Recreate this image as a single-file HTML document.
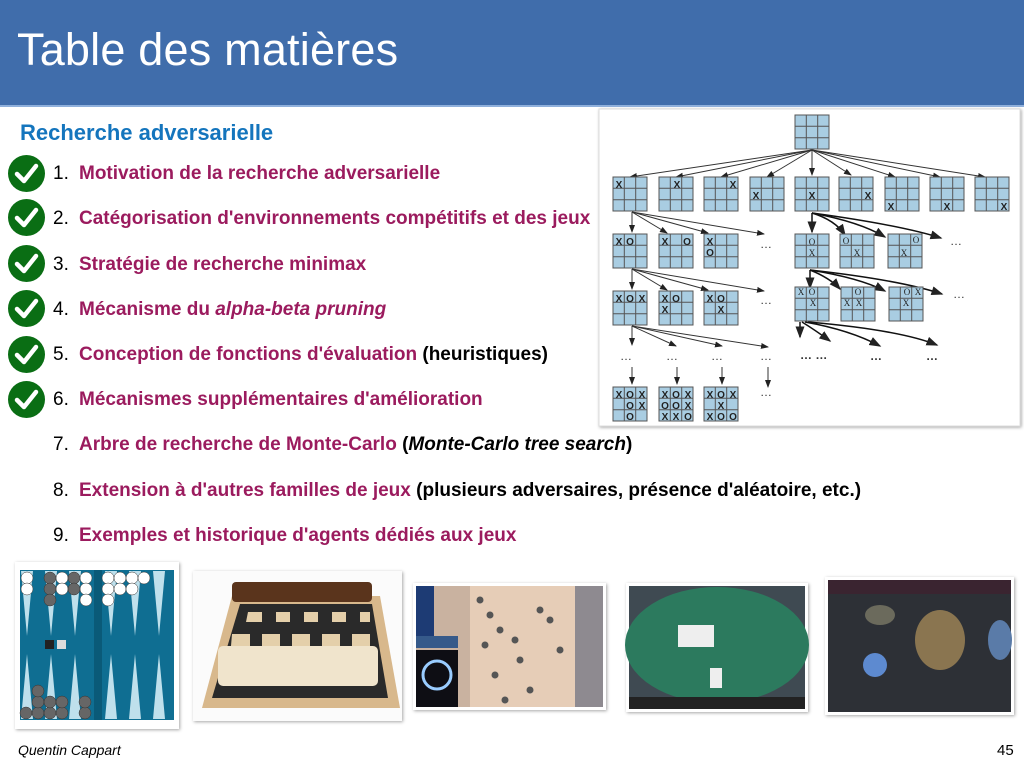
<!DOCTYPE html>
<html><head><meta charset="utf-8"><style>
body{margin:0;width:1024px;height:768px;overflow:hidden;background:#fff;font-family:"Liberation Sans",sans-serif;position:relative}
.hdr{position:absolute;left:0;top:0;width:1024px;height:105px;background:#406dab;border-bottom:2px solid #8fb0dc}
.hdr h1{margin:0;position:absolute;left:17px;top:24px;font-weight:normal;color:#fff;font-size:45px;letter-spacing:0.2px}
.sec{position:absolute;left:20px;top:120px;color:#1475bd;font-weight:bold;font-size:22px}
.it{position:absolute;left:53px;font-size:19px;white-space:nowrap;color:#000}
.it .n{display:inline-block;width:26px}
.it b{color:#9b1b5e}
.it .k{font-weight:bold;color:#000}
.ck{position:absolute;left:8px;width:37px;height:37px;border-radius:50%;background:#0a6e14}
.ft{position:absolute;top:742px;font-size:14px}
</style></head><body>
<div class="hdr"><h1>Table des matières</h1></div>
<div class="sec">Recherche adversarielle</div>

<div class="ck" style="top:155px"><svg width="37" height="37"><path d="M9 19 L16 26 L28 11" stroke="#fff" stroke-width="4.5" fill="none" stroke-linecap="round" stroke-linejoin="round"/></svg></div>
<div class="ck" style="top:199px"><svg width="37" height="37"><path d="M9 19 L16 26 L28 11" stroke="#fff" stroke-width="4.5" fill="none" stroke-linecap="round" stroke-linejoin="round"/></svg></div>
<div class="ck" style="top:245px"><svg width="37" height="37"><path d="M9 19 L16 26 L28 11" stroke="#fff" stroke-width="4.5" fill="none" stroke-linecap="round" stroke-linejoin="round"/></svg></div>
<div class="ck" style="top:290px"><svg width="37" height="37"><path d="M9 19 L16 26 L28 11" stroke="#fff" stroke-width="4.5" fill="none" stroke-linecap="round" stroke-linejoin="round"/></svg></div>
<div class="ck" style="top:336px"><svg width="37" height="37"><path d="M9 19 L16 26 L28 11" stroke="#fff" stroke-width="4.5" fill="none" stroke-linecap="round" stroke-linejoin="round"/></svg></div>
<div class="ck" style="top:381px"><svg width="37" height="37"><path d="M9 19 L16 26 L28 11" stroke="#fff" stroke-width="4.5" fill="none" stroke-linecap="round" stroke-linejoin="round"/></svg></div>

<div class="it" style="top:163px"><span class="n">1.</span><b>Motivation de la recherche adversarielle</b></div>
<div class="it" style="top:208px"><span class="n">2.</span><b>Catégorisation d'environnements compétitifs et des jeux</b></div>
<div class="it" style="top:254px"><span class="n">3.</span><b>Stratégie de recherche minimax</b></div>
<div class="it" style="top:299px"><span class="n">4.</span><b>Mécanisme du <i>alpha-beta pruning</i></b></div>
<div class="it" style="top:344px"><span class="n">5.</span><b>Conception de fonctions d'évaluation</b> <span class="k">(heuristiques)</span></div>
<div class="it" style="top:389px"><span class="n">6.</span><b>Mécanismes supplémentaires d'amélioration</b></div>
<div class="it" style="top:434px"><span class="n">7.</span><b>Arbre de recherche de Monte-Carlo</b> <span class="k">(<i>Monte-Carlo tree search</i>)</span></div>
<div class="it" style="top:480px"><span class="n">8.</span><b>Extension à d'autres familles de jeux</b> <span class="k">(plusieurs adversaires, présence d'aléatoire, etc.)</span></div>
<div class="it" style="top:525px"><span class="n">9.</span><b>Exemples et historique d'agents dédiés aux jeux</b></div>

<svg style="position:absolute;left:0;top:0" width="1024" height="768">
<defs>
<g id="g"><rect width="34" height="34" fill="#a9cde2" stroke="#555" stroke-width="1"/><path d="M11.3 0V34M22.7 0V34M0 11.3H34M0 22.7H34" stroke="#555" stroke-width="1"/></g>
<marker id="a" markerWidth="8" markerHeight="8" refX="7" refY="4" orient="auto"><path d="M0 1L8 4L0 7Z" fill="#222"/></marker>
<filter id="sh"><feDropShadow dx="1" dy="1" stdDeviation="1.5" flood-opacity="0.35"/></filter>
</defs>
<rect x="599" y="109" width="421" height="317" fill="#fff" stroke="#ddd" filter="url(#sh)"/>
<g stroke="#333" stroke-width="1" marker-end="url(#a)">
<line x1="812" y1="150" x2="630" y2="177"/><line x1="812" y1="150" x2="676" y2="177"/><line x1="812" y1="150" x2="721" y2="177"/><line x1="812" y1="150" x2="767" y2="177"/><line x1="812" y1="150" x2="812" y2="175"/><line x1="812" y1="150" x2="851" y2="175"/><line x1="812" y1="150" x2="895" y2="177"/><line x1="812" y1="150" x2="940" y2="177"/><line x1="812" y1="150" x2="985" y2="177"/>
<line x1="632" y1="212" x2="632" y2="232"/><line x1="632" y1="212" x2="667" y2="233"/><line x1="632" y1="212" x2="708" y2="233"/><line x1="632" y1="212" x2="764" y2="234"/>
<line x1="632" y1="269" x2="632" y2="289"/><line x1="632" y1="269" x2="667" y2="290"/><line x1="632" y1="269" x2="708" y2="290"/><line x1="632" y1="269" x2="764" y2="291"/>
<line x1="632" y1="326" x2="632" y2="345"/><line x1="632" y1="326" x2="676" y2="346"/><line x1="632" y1="326" x2="722" y2="346"/><line x1="632" y1="326" x2="768" y2="347"/>
<line x1="632" y1="367" x2="632" y2="384"/><line x1="677" y1="367" x2="677" y2="384"/><line x1="722" y1="367" x2="722" y2="384"/><line x1="768" y1="367" x2="768" y2="387"/>
</g>
<g stroke="#111" stroke-width="1.5" marker-end="url(#a)" fill="none">
<line x1="812" y1="213" x2="812" y2="232"/><path d="M812 213 Q835 220 845 235"/><path d="M812 213 Q860 222 885 237"/><path d="M812 213 Q900 225 941 238"/>
<line x1="810" y1="270" x2="810" y2="288"/><path d="M810 270 Q830 278 840 289"/><path d="M810 270 Q860 278 885 291"/><path d="M810 270 Q900 280 942 294"/>
<line x1="800" y1="322" x2="800" y2="337"/><path d="M802 322 Q815 330 830 341"/><path d="M805 322 Q850 330 880 346"/><path d="M808 322 Q900 330 937 345"/>
</g>
<use href="#g" x="795" y="115"/>
<use href="#g" x="613" y="177"/><use href="#g" x="659" y="177"/><use href="#g" x="704" y="177"/><use href="#g" x="750" y="177"/><use href="#g" x="795" y="177"/><use href="#g" x="839" y="177"/><use href="#g" x="885" y="177"/><use href="#g" x="930" y="177"/><use href="#g" x="975" y="177"/>
<use href="#g" x="613" y="234"/><use href="#g" x="659" y="234"/><use href="#g" x="704" y="234"/><use href="#g" x="795" y="234"/><use href="#g" x="840" y="234"/><use href="#g" x="888" y="234"/>
<use href="#g" x="613" y="291"/><use href="#g" x="659" y="291"/><use href="#g" x="704" y="291"/><use href="#g" x="795" y="287"/><use href="#g" x="841" y="287"/><use href="#g" x="889" y="287"/>
<use href="#g" x="613" y="387"/><use href="#g" x="659" y="387"/><use href="#g" x="704" y="387"/>
<g font-family="Liberation Sans" font-weight="bold" font-size="10" text-anchor="middle" fill="#222">
<text x="619" y="188">X</text><text x="677" y="188">X</text><text x="733" y="188">X</text><text x="756" y="199">X</text><text x="812" y="199">X</text><text x="868" y="199">X</text><text x="891" y="210">X</text><text x="947" y="210">X</text><text x="1004" y="210">X</text>
<text x="619" y="245">X</text><text x="630" y="245">O</text><text x="665" y="245">X</text><text x="687" y="245">O</text><text x="710" y="245">X</text><text x="710" y="256">O</text>
<text x="619" y="302">X</text><text x="630" y="302">O</text><text x="642" y="302">X</text><text x="665" y="302">X</text><text x="676" y="302">O</text><text x="665" y="313">X</text><text x="710" y="302">X</text><text x="721" y="302">O</text><text x="721" y="313">X</text>
<text x="619" y="398">X</text><text x="630" y="398">O</text><text x="642" y="398">X</text><text x="630" y="409">O</text><text x="642" y="409">X</text><text x="630" y="420">O</text>
<text x="665" y="398">X</text><text x="676" y="398">O</text><text x="688" y="398">X</text><text x="665" y="409">O</text><text x="676" y="409">O</text><text x="688" y="409">X</text><text x="665" y="420">X</text><text x="676" y="420">X</text><text x="688" y="420">O</text>
<text x="710" y="398">X</text><text x="721" y="398">O</text><text x="733" y="398">X</text><text x="721" y="409">X</text><text x="710" y="420">X</text><text x="721" y="420">O</text><text x="733" y="420">O</text>
</g>
<g font-family="Liberation Serif" font-size="9" text-anchor="middle" fill="#222">
<text x="812" y="245">O</text><text x="812" y="256">X</text><text x="846" y="244">O</text><text x="857" y="256">X</text><text x="916" y="243">O</text><text x="904" y="256">X</text>
<text x="801" y="295">X</text><text x="812" y="295">O</text><text x="813" y="306">X</text><text x="858" y="295">O</text><text x="847" y="306">X</text><text x="859" y="306">X</text><text x="907" y="295">O</text><text x="918" y="295">X</text><text x="906" y="306">X</text>
</g>
<g font-family="Liberation Sans" font-size="12" fill="#333">
<text x="760" y="248">…</text><text x="760" y="304">…</text><text x="950" y="245">…</text><text x="953" y="298">…</text>
<text x="620" y="360">…</text><text x="666" y="360">…</text><text x="711" y="360">…</text><text x="760" y="360">…</text><text x="760" y="396">…</text>
<text x="800" y="359" font-weight="bold">… …</text><text x="870" y="360" font-weight="bold">…</text><text x="926" y="360" font-weight="bold">…</text>
</g>

<!-- backgammon -->
<rect x="15" y="562" width="164" height="167" fill="#fff" filter="url(#sh)"/>
<rect x="20" y="570" width="154" height="150" fill="#0f6e92"/>
<rect x="94" y="570" width="8" height="150" fill="#0a5a78"/>
<g fill="#bfe0ec">
<path d="M21 571h12l-6 65zM45 571h12l-6 65zM69 571h12l-6 65zM105 571h12l-6 65zM129 571h12l-6 65zM153 571h12l-6 65z"/>
<path d="M21 719h12l-6-65zM45 719h12l-6-65zM69 719h12l-6-65zM105 719h12l-6-65zM129 719h12l-6-65zM153 719h12l-6-65z"/>
</g>
<g fill="#fff" stroke="#333" stroke-width=".5"><circle cx="27" cy="578" r="6"/><circle cx="27" cy="589" r="6"/><circle cx="62" cy="578" r="6"/><circle cx="62" cy="589" r="6"/><circle cx="86" cy="578" r="6"/><circle cx="86" cy="589" r="6"/><circle cx="86" cy="600" r="6"/><circle cx="108" cy="578" r="6"/><circle cx="108" cy="589" r="6"/><circle cx="108" cy="600" r="6"/><circle cx="120" cy="578" r="6"/><circle cx="120" cy="589" r="6"/><circle cx="132" cy="578" r="6"/><circle cx="132" cy="589" r="6"/><circle cx="144" cy="578" r="6"/></g>
<g fill="#666" stroke="#333" stroke-width=".5"><circle cx="50" cy="578" r="6"/><circle cx="50" cy="589" r="6"/><circle cx="50" cy="600" r="6"/><circle cx="74" cy="578" r="6"/><circle cx="74" cy="589" r="6"/>
<circle cx="26" cy="713" r="6"/><circle cx="38" cy="713" r="6"/><circle cx="38" cy="702" r="6"/><circle cx="38" cy="691" r="6"/><circle cx="50" cy="713" r="6"/><circle cx="50" cy="702" r="6"/><circle cx="62" cy="713" r="6"/><circle cx="62" cy="702" r="6"/><circle cx="85" cy="713" r="6"/><circle cx="85" cy="702" r="6"/></g>
<rect x="45" y="640" width="9" height="9" fill="#222"/><rect x="57" y="640" width="9" height="9" fill="#ddd"/>

<!-- chess -->
<rect x="193" y="571" width="209" height="150" fill="#fbfbfb" filter="url(#sh)"/>
<path d="M232 596 L380 596 L400 708 L202 708 Z" fill="#d8b88c"/>
<path d="M240 604 L372 604 L388 698 L212 698 Z" fill="#2a2a2a"/>
<g fill="#e4cfaa">
<path d="M248 612h14v10h-16zM276 612h14v10h-14zM304 612h14v10h-14zM332 612h14v10h-14zM360 612h10v10h-10z"/>
<path d="M232 634h18v12h-19zM262 634h18v12h-18zM292 634h18v12h-18zM322 634h18v12h-18zM352 634h18v12h-18z"/>
<path d="M244 658h20v13h-21zM276 658h20v13h-20zM308 658h20v13h-20zM340 658h20v13h-20z"/>
</g>
<g fill="#5a341c"><rect x="232" y="582" width="140" height="20" rx="4"/></g>
<g fill="#f0e4cc"><rect x="218" y="646" width="160" height="40" rx="5"/></g>

<!-- go -->
<rect x="413" y="583" width="193" height="127" fill="#fff" filter="url(#sh)"/>
<rect x="416" y="586" width="187" height="121" fill="#c9b2a0"/>
<rect x="416" y="586" width="18" height="50" fill="#1d3b74"/>
<rect x="416" y="636" width="42" height="12" fill="#365a8a"/>
<rect x="416" y="650" width="42" height="57" fill="#0e0e14"/>
<circle cx="437" cy="675" r="14" fill="none" stroke="#9cf" stroke-width="3"/>
<rect x="470" y="586" width="105" height="121" fill="#e6cdb7"/>
<g fill="#555"><circle cx="480" cy="600" r="3.5"/><circle cx="490" cy="615" r="3.5"/><circle cx="500" cy="630" r="3.5"/><circle cx="485" cy="645" r="3.5"/><circle cx="520" cy="660" r="3.5"/><circle cx="495" cy="675" r="3.5"/><circle cx="530" cy="690" r="3.5"/><circle cx="550" cy="620" r="3.5"/><circle cx="560" cy="650" r="3.5"/><circle cx="505" cy="700" r="3.5"/><circle cx="540" cy="610" r="3.5"/><circle cx="515" cy="640" r="3.5"/></g>
<rect x="575" y="586" width="28" height="121" fill="#8e8a90"/>

<!-- poker -->
<rect x="626" y="583" width="182" height="129" fill="#fff" filter="url(#sh)"/>
<rect x="629" y="586" width="176" height="123" fill="#3f4a52"/>
<ellipse cx="717" cy="645" rx="92" ry="58" fill="#2c7a5e"/>
<rect x="629" y="697" width="176" height="12" fill="#222"/>
<rect x="678" y="625" width="36" height="22" fill="#eee"/>
<rect x="710" y="668" width="12" height="20" fill="#eee"/>

<!-- starcraft -->
<rect x="825" y="577" width="189" height="138" fill="#fff" filter="url(#sh)"/>
<rect x="828" y="580" width="183" height="132" fill="#2d3036"/>
<rect x="828" y="580" width="183" height="14" fill="#3a2430"/>
<ellipse cx="940" cy="640" rx="25" ry="30" fill="#8a7550"/>
<circle cx="875" cy="665" r="12" fill="#5d8ad0"/>
<ellipse cx="1000" cy="640" rx="12" ry="20" fill="#5a7ba8"/>
<ellipse cx="880" cy="615" rx="15" ry="10" fill="#6b6a5c"/>
</svg>

<div class="ft" style="left:18px;font-style:italic">Quentin Cappart</div>
<div class="ft" style="left:997px;font-size:15px">45</div>
</body></html>
